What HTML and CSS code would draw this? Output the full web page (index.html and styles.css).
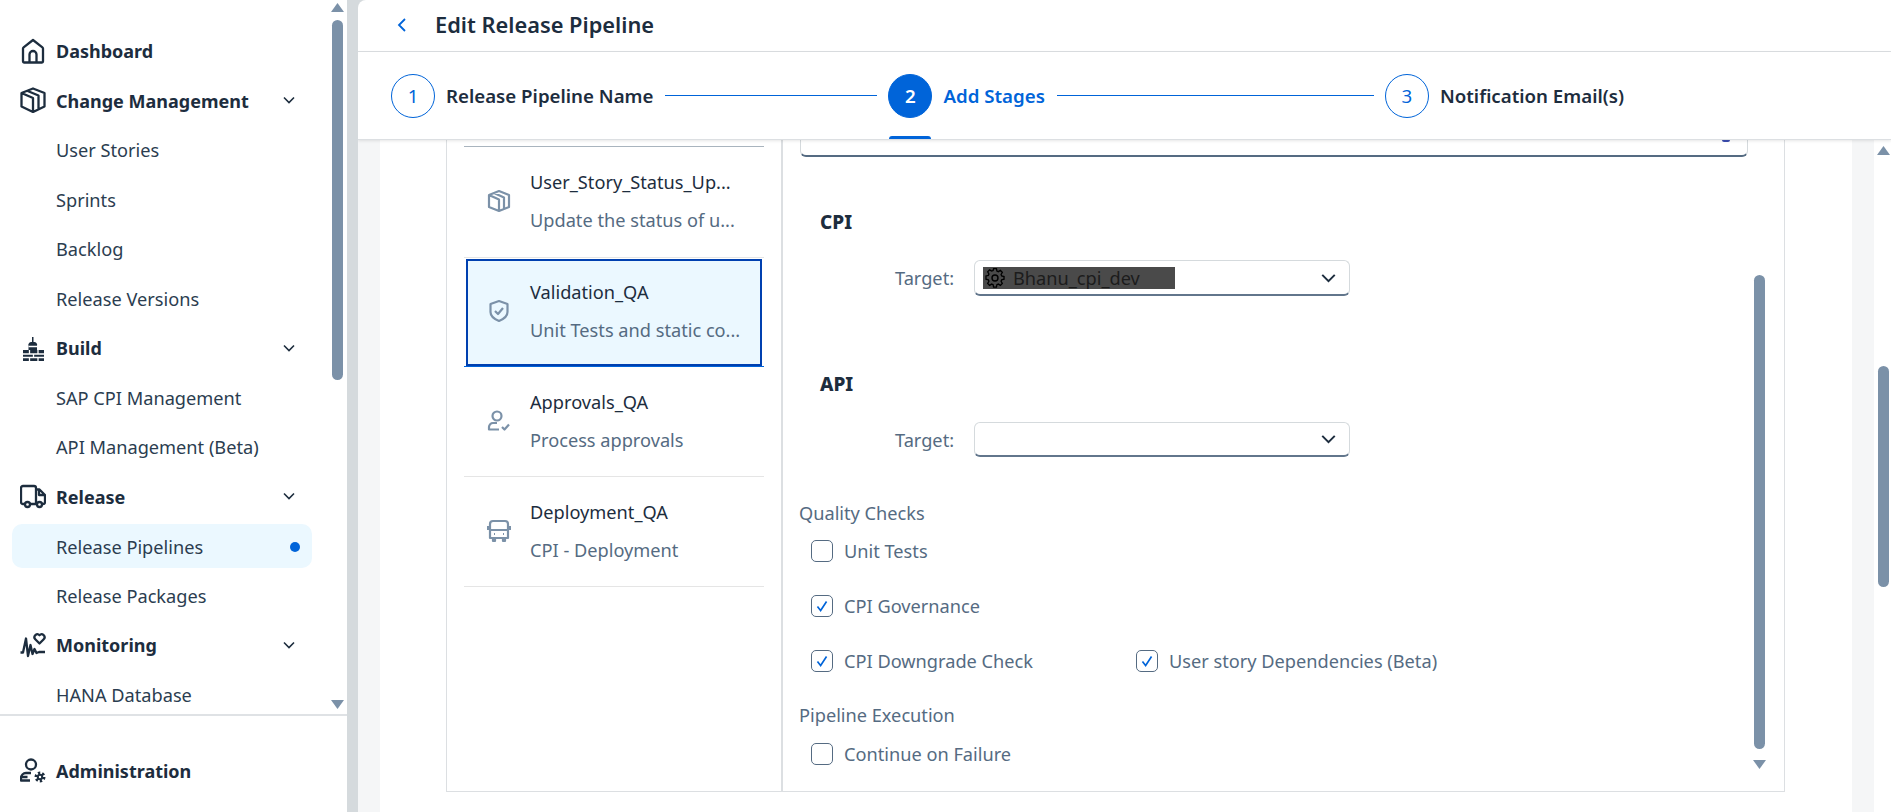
FILE: index.html
```html
<!DOCTYPE html>
<html lang="en">
<head>
    <meta charset="UTF-8">
    <meta name="viewport" content="width=device-width, initial-scale=1.0">
    <title>Edit Release Pipeline</title>
    <link rel="stylesheet" href="styles.css">
</head>
<body>
<div class="app">

    <aside class="sidebar">
        <nav class="nav-list">
            <div class="nav-item nav-head">
                <svg class="nav-icon" viewBox="0 0 26 26"><path d="M4 24.500h18a1 1 0 0 0 1-1V10.500a1.500 1.500 0 0 0-.6-1.200L13 2 3.600 9.300a1.500 1.500 0 0 0-.6 1.200v13a1 1 0 0 0 1 1zM9.500 24.500v-8a3.500 3.500 0 0 1 7 0v8"/></svg>
                <span>Dashboard</span>
            </div>
            <div class="nav-item nav-head">
                <svg class="nav-icon" viewBox="0 0 26 26"><path d="M13 1.500 24.500 6v13.500L13 25 1.500 19.500V6zM1.500 6 13 11v14M7 3.800 18.500 8.500v13.500"/></svg>
                <span>Change Management</span>
                <svg class="chevron" viewBox="0 0 12 8"><path d="M1 1.500 6 6.500 11 1.500"/></svg>
            </div>
            <div class="nav-item nav-sub">User Stories</div>
            <div class="nav-item nav-sub">Sprints</div>
            <div class="nav-item nav-sub">Backlog</div>
            <div class="nav-item nav-sub">Release Versions</div>
            <div class="nav-item nav-head">
                <svg class="nav-icon" viewBox="0 0 26 26"><path class="solid" d="M3 15h5.500v-4a3 3 0 0 1 3.500-4V2h1.500v5a3 3 0 0 1 3.500 4v4H24v11H3z"/><path class="cut" d="M3 19h21M3 22.500h21M8.500 11.500h10M9.500 15v4M18 15v4M13.500 19v3.500M9.500 22.500V26M18 22.500V26"/></svg>
                <span>Build</span>
                <svg class="chevron" viewBox="0 0 12 8"><path d="M1 1.500 6 6.500 11 1.500"/></svg>
            </div>
            <div class="nav-item nav-sub">SAP CPI Management</div>
            <div class="nav-item nav-sub">API Management (Beta)</div>
            <div class="nav-item nav-head">
                <svg class="nav-icon" viewBox="0 0 26 26"><path d="M5 21H3a2 2 0 0 1-2-2V5a2 2 0 0 1 2-2h11a2 2 0 0 1 2 2v16H10M16 6.500h3.500L25 12v7a2 2 0 0 1-2 2h-1M16 21h1M19 7v5h6"/><circle cx="7.500" cy="21.500" r="2.500"/><circle cx="19.500" cy="21.500" r="2.500"/></svg>
                <span>Release</span>
                <svg class="chevron" viewBox="0 0 12 8"><path d="M1 1.500 6 6.500 11 1.500"/></svg>
            </div>
            <div class="nav-item nav-sub active">
                <span>Release Pipelines</span>
                <i class="dot"></i>
            </div>
            <div class="nav-item nav-sub">Release Packages</div>
            <div class="nav-item nav-head">
                <svg class="nav-icon" viewBox="0 0 26 26"><path d="M.5 20.500H3L6 6.500 8 24l2.500-11 2 9 2-5 2 4 2.500-1h6M19.500 11.500l-4.200-4.300a2.900 2.900 0 0 1 4.200-4 2.900 2.900 0 0 1 4.200 4z"/></svg>
                <span>Monitoring</span>
                <svg class="chevron" viewBox="0 0 12 8"><path d="M1 1.500 6 6.500 11 1.500"/></svg>
            </div>
            <div class="nav-item nav-sub">HANA Database</div>
        </nav>

        <div class="side-scroll">
            <i class="arrow-up"></i>
            <i class="thumb side-thumb"></i>
            <i class="arrow-down side-down"></i>
        </div>

        <div class="sidebar-foot">
            <svg class="nav-icon" viewBox="0 0 26 26"><circle cx="11" cy="6.500" r="5"/><path d="M11 15H6a5 5 0 0 0-5 5v2.500h9M1.500 19h6"/><circle class="gear-teeth" cx="20" cy="19" r="4"/><circle class="gear-core" cx="20" cy="19" r="2.200"/></svg>
            <span>Administration</span>
        </div>
    </aside>

    <main class="main">
        <header class="page-head">
            <svg class="back" viewBox="0 0 10 16"><path d="M8 2 2 8l6 6"/></svg>
            <h1>Edit Release Pipeline</h1>
        </header>

        <div class="stepper">
            <div class="step">
                <span class="step-num">1</span>
                <span class="step-name">Release Pipeline Name</span>
            </div>
            <i class="step-line line-a"></i>
            <div class="step current">
                <span class="step-num">2</span>
                <span class="step-name">Add Stages</span>
                <i class="step-tab"></i>
            </div>
            <i class="step-line line-b"></i>
            <div class="step">
                <span class="step-num">3</span>
                <span class="step-name">Notification Email(s)</span>
            </div>
        </div>

        <div class="page-body">
            <div class="panel">
                <div class="frame">
                    <section class="stages">
                        <ul class="stage-list">
                            <li class="stage-item">
                                <div class="stage-inner">
                                    <svg class="stage-icon" viewBox="0 0 24 24"><path d="M12 2 22 6v12L12 22 2 18V6zM2 6l10 4.500V22M7 4l10 4.500V20"/></svg>
                                    <div>
                                        <div class="stage-name">User_Story_Status_Up...</div>
                                        <div class="stage-desc">Update the status of u...</div>
                                    </div>
                                </div>
                            </li>
                            <li class="stage-item selected">
                                <div class="stage-inner">
                                    <svg class="stage-icon" viewBox="0 0 24 24"><path d="M12 2 20.500 5v8c0 4-3.500 7-8.500 9-5-2-8.500-5-8.500-9V5zM8 12l3 3 5-6"/></svg>
                                    <div>
                                        <div class="stage-name">Validation_QA</div>
                                        <div class="stage-desc">Unit Tests and static co...</div>
                                    </div>
                                </div>
                            </li>
                            <li class="stage-item">
                                <div class="stage-inner">
                                    <svg class="stage-icon" viewBox="0 0 24 24"><circle cx="10" cy="7" r="4.500"/><path d="M10 14H6a4 4 0 0 0-4 4v2.500h10M15 18l2.500 2.500L22 15.500"/></svg>
                                    <div>
                                        <div class="stage-name">Approvals_QA</div>
                                        <div class="stage-desc">Process approvals</div>
                                    </div>
                                </div>
                            </li>
                            <li class="stage-item">
                                <div class="stage-inner">
                                    <svg class="stage-icon" viewBox="0 0 24 24"><path d="M6 2h12a3 3 0 0 1 3 3v14H3V5a3 3 0 0 1 3-3zM3 11h18M1 7v4M23 7v4M6 19v3h2v-3M16 19v3h2v-3M7 15h1M16 15h1"/></svg>
                                    <div>
                                        <div class="stage-name">Deployment_QA</div>
                                        <div class="stage-desc">CPI - Deployment</div>
                                    </div>
                                </div>
                            </li>
                        </ul>
                    </section>

                    <section class="detail">
                        <div class="field-stub"><i class="stub-mark"></i></div>

                        <h3 class="group-title cpi-title">CPI</h3>
                        <div class="target-row cpi-row">
                            <label>Target:</label>
                            <div class="select">
                                <span class="picked">
                                    <svg class="gear" viewBox="0 0 20 20"><path d="M8.500 1.500h3l.5 2.500 1.500.7 2.200-1.300 2 2.100-1.300 2.200.6 1.500 2.500.6v2.900l-2.500.6-.6 1.500 1.300 2.200-2 2.100-2.200-1.300-1.500.6-.5 2.500h-3l-.5-2.500-1.500-.6-2.200 1.300-2-2.100 1.300-2.200-.6-1.500-2.500-.6V9.200l2.500-.6.6-1.500L2.300 4.900l2-2.100 2.200 1.300L8 3.500z" transform="translate(.5 -.8) scale(.95)"/><circle cx="10" cy="10" r="3"/></svg>
                                    Bhanu_cpi_dev
                                </span>
                                <svg class="chevron" viewBox="0 0 12 8"><path d="M1 1.500 6 6.500 11 1.500"/></svg>
                            </div>
                        </div>

                        <h3 class="group-title api-title">API</h3>
                        <div class="target-row api-row">
                            <label>Target:</label>
                            <div class="select">
                                <svg class="chevron" viewBox="0 0 12 8"><path d="M1 1.500 6 6.500 11 1.500"/></svg>
                            </div>
                        </div>

                        <div class="check-label quality">Quality Checks</div>
                        <div class="check-grid">
                            <div class="check"><i class="box"></i>Unit Tests</div>
                            <div></div>
                            <div class="check"><i class="box on"><svg viewBox="0 0 22 22"><path d="M6 11.500 9.500 16 16 6"/></svg></i>CPI Governance</div>
                            <div></div>
                            <div class="check"><i class="box on"><svg viewBox="0 0 22 22"><path d="M6 11.500 9.500 16 16 6"/></svg></i>CPI Downgrade Check</div>
                            <div class="check"><i class="box on"><svg viewBox="0 0 22 22"><path d="M6 11.500 9.500 16 16 6"/></svg></i>User story Dependencies (Beta)</div>
                        </div>

                        <div class="check-label execution">Pipeline Execution</div>
                        <div class="check-grid failure">
                            <div class="check"><i class="box"></i>Continue on Failure</div>
                        </div>

                        <div class="detail-scroll">
                            <i class="thumb detail-thumb"></i>
                            <i class="arrow-down detail-down"></i>
                        </div>
                    </section>
                </div>
            </div>

            <div class="strip"></div>

            <div class="page-scroll">
                <i class="arrow-up"></i>
                <i class="thumb page-thumb"></i>
            </div>
        </div>
    </main>

</div>
</body>
</html>
```

FILE: styles.css
```css
* {
    box-sizing: border-box;
}

html, body {
    margin: 0;
    height: 100%;
    overflow: hidden;
}

body {
    font-family: "Noto Sans", sans-serif;
    font-size: 18.2px;
    color: #1d2d3e;
    background-color: #d5dadd;
}

svg {
    display: block;
    fill: none;
}

.app {
    display: flex;
    height: 812px;
}

/* sidebar */
.sidebar {
    position: relative;
    width: 347px;
    flex: none;
    background-color: #fff;
    display: flex;
    flex-direction: column;
}

.nav-list {
    height: 716px;
    padding: 26px 35px 0 12px;
    border-bottom: 2px solid #dfe2e5;
    overflow: hidden;
}

.nav-item {
    height: 49.5px;
    display: flex;
    align-items: center;
    white-space: nowrap;
}

.nav-head {
    padding: 0 17px 0 8px;
    gap: 10px;
    font-size: 18px;
    font-weight: 700;
}

.nav-head span {
    padding-top: 1px;
}

.nav-sub {
    padding: 1px 12px 0 44px;
    color: #2b3d50;
}

.nav-sub.active {
    height: 44px;
    margin: 3px 0 2.5px;
    background-color: #ebf8ff;
    border-radius: 10px;
    justify-content: space-between;
}

.dot {
    width: 10px;
    height: 10px;
    border-radius: 50%;
    background-color: #0064d9;
}

.nav-icon {
    width: 26px;
    height: 26px;
    flex: none;
    stroke: #1d2d3e;
    stroke-width: 2.3;
    stroke-linejoin: round;
}

.nav-icon .solid {
    fill: #1d2d3e;
    stroke: none;
}

.nav-icon .cut {
    stroke: #fff;
    stroke-width: 1.3;
}

.nav-icon .gear-teeth {
    stroke-width: 3;
    stroke-dasharray: 2.2 1.9;
    stroke: #1d2d3e;
}

.nav-icon .gear-core {
    stroke-width: 2;
}

.chevron {
    width: 12px;
    height: 8px;
    flex: none;
    margin-left: auto;
    stroke: #1d2d3e;
    stroke-width: 1.6;
}

.sidebar-foot {
    display: flex;
    align-items: center;
    gap: 10px;
    padding: 42px 0 0 20px;
    font-size: 18px;
    font-weight: 700;
}

/* scrollbars */
.thumb {
    display: block;
    background-color: #7b91a8;
    border-radius: 6px;
}

.arrow-up,
.arrow-down {
    display: block;
    width: 13px;
    height: 9px;
    background-color: #7b91a8;
}

.arrow-up {
    clip-path: polygon(50% 0, 100% 100%, 0 100%);
}

.arrow-down {
    clip-path: polygon(0 0, 100% 0, 50% 100%);
}

.side-scroll {
    position: absolute;
    top: 3px;
    left: 331px;
    width: 13px;
}

.side-thumb {
    width: 11px;
    height: 360px;
    margin: 8px 0 0 1px;
}

.side-down {
    margin-top: 320px;
}

/* main column */
.main {
    flex: 1;
    min-width: 0;
    margin-left: 11px;
    display: flex;
    flex-direction: column;
    background-color: #fff;
    border-top-left-radius: 8px;
    overflow: hidden;
}

.page-head {
    height: 52px;
    display: flex;
    align-items: center;
    padding: 0 0 2px 39px;
    border-bottom: 1px solid #dcdfe2;
}

.back {
    width: 10px;
    height: 16px;
    stroke: #0064d9;
    stroke-width: 1.8;
}

.page-head h1 {
    margin: 0 0 0 28px;
    font-size: 21.8px;
    font-weight: 600;
}

.stepper {
    position: relative;
    height: 88px;
    display: flex;
    align-items: center;
    padding: 0 0 0 33px;
    border-bottom: 1px solid #dcdfe2;
    box-shadow: 0 1px 3px rgba(0, 0, 0, 0.1);
    z-index: 2;
    background-color: #fff;
}

.step {
    position: relative;
    display: flex;
    align-items: center;
    gap: 11px;
    font-size: 18.7px;
    font-weight: 600;
    white-space: nowrap;
}

.step-num {
    width: 44px;
    height: 44px;
    border: 1px solid #0064d9;
    border-radius: 50%;
    color: #0064d9;
    display: flex;
    align-items: center;
    justify-content: center;
    font-weight: 400;
}

.step.current .step-num {
    background-color: #0064d9;
    color: #fff;
    font-weight: 600;
}

.step.current .step-name {
    color: #0064d9;
}

.step-tab {
    position: absolute;
    left: 1px;
    bottom: -21px;
    width: 42px;
    height: 3px;
    background-color: #0064d9;
    border-radius: 3px 3px 0 0;
}

.step-line {
    height: 1px;
    background-color: #0064d9;
    margin: 0 11px 0 12px;
}

.line-a {
    width: 212px;
}

.line-b {
    width: 317px;
}

.page-body {
    flex: 1;
    min-height: 0;
    display: flex;
    background-color: #f5f6f7;
    padding-left: 22px;
}

.panel {
    width: 1472px;
    height: 100%;
    padding: 0 67px 20px 66px;
    background-color: #fff;
}

.strip {
    width: 22px;
}

.page-scroll {
    width: 17px;
    background-color: #fff;
    padding: 6px 0 0 3px;
}

.page-thumb {
    width: 11px;
    height: 221px;
    margin: 211px 0 0 1px;
}

.frame {
    height: 100%;
    display: flex;
    border: 1px solid #dcdfe2;
    border-top: 0;
}

/* stage list */
.stages {
    width: 336px;
    flex: none;
    padding: 6px 17px 0 17px;
    border-right: 2px solid #dcdfe2;
}

.stage-list {
    list-style: none;
    margin: 0;
    padding: 0;
    border-top: 1px solid #a9b4be;
}

.stage-item {
    height: 110px;
    display: flex;
    border-bottom: 1px solid #e5e5e5;
}

.stage-item:first-child {
    height: 111px;
}

.stage-item.selected {
    height: 109px;
    border-bottom-color: #0064d9;
}

.stage-inner {
    flex: 1;
    margin: 1px 2px 0;
    padding: 0 0 3px 19px;
    border: 2px solid transparent;
    display: flex;
    align-items: center;
    gap: 19px;
}

.selected .stage-inner {
    background-color: #ebf8ff;
    border-color: #0040b0;
}

.stage-icon {
    width: 24px;
    height: 24px;
    flex: none;
    stroke: #7b91a8;
    stroke-width: 2.2;
    stroke-linejoin: round;
}

.stage-name,
.stage-desc {
    line-height: 24px;
    white-space: nowrap;
}

.stage-desc {
    margin-top: 14px;
    color: #556b82;
}

/* detail pane */
.detail {
    position: relative;
    flex: 1;
    min-width: 0;
    padding-left: 16px;
}

.field-stub {
    position: relative;
    width: 948px;
    height: 17px;
    margin-left: 1px;
    border: 1px solid #d5dadd;
    border-top: 0;
    border-bottom: 2px solid #556b82;
    border-radius: 0 0 6px 6px;
}

.stub-mark {
    position: absolute;
    top: 0;
    right: 17px;
    width: 8px;
    height: 2px;
    border-radius: 0 0 4px 4px;
    background-color: #3b4db0;
}

.group-title {
    margin: 0;
    padding-left: 21px;
    font-size: 19px;
    line-height: 24px;
    font-weight: 800;
}

.cpi-title {
    margin-top: 53px;
}

.api-title {
    margin-top: 76px;
}

.target-row {
    display: flex;
    align-items: center;
    gap: 23px;
    padding-left: 96px;
}

.cpi-row {
    margin-top: 26px;
}

.api-row {
    margin-top: 26px;
}

.api-row .select {
    height: 35px;
}

.target-row label {
    width: 56px;
    color: #556b82;
}

.select {
    width: 376px;
    height: 36px;
    display: flex;
    align-items: center;
    padding: 0 13px 0 8px;
    border: 1px solid #d5dadd;
    border-bottom: 2px solid #62768c;
    border-radius: 6px;
}

.select .chevron {
    width: 15px;
    height: 10px;
}

.picked {
    width: 192px;
    height: 22px;
    display: flex;
    align-items: center;
    gap: 8px;
    padding-left: 2px;
    background-color: #4a4a4a;
    color: #1c1c1c;
    white-space: nowrap;
}

.gear {
    width: 20px;
    height: 20px;
    stroke: #000;
    stroke-width: 1.4;
}

.check-label {
    line-height: 24px;
    color: #556b82;
}

.quality {
    margin-top: 44px;
}

.execution {
    margin-top: 31px;
}

.check-grid {
    display: grid;
    grid-template-columns: 325px 1fr;
    row-gap: 33px;
    margin-top: 15px;
    padding-left: 12px;
}

.failure {
    margin-top: 16px;
}

.check {
    display: flex;
    align-items: center;
    gap: 11px;
    height: 22px;
    color: #556b82;
    white-space: nowrap;
}

.box {
    width: 22px;
    height: 22px;
    flex: none;
    border: 1px solid #556b82;
    border-radius: 5px;
    background-color: #fff;
}

.box svg {
    width: 20px;
    height: 20px;
    stroke: #0064d9;
    stroke-width: 1.8;
}

.detail-scroll {
    position: absolute;
    top: 135px;
    right: 19px;
    width: 11px;
}

.detail-thumb {
    width: 11px;
    height: 474px;
}

.detail-down {
    margin: 11px 0 0 -1px;
}
```
